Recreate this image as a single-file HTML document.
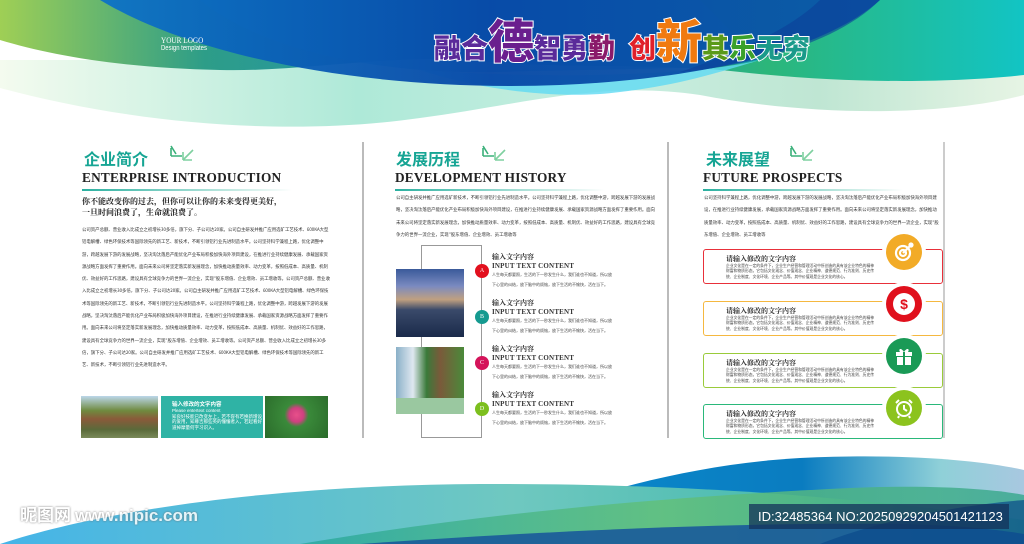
<!DOCTYPE html>
<html><head><meta charset="utf-8">
<style>
*{margin:0;padding:0;box-sizing:border-box}
body{width:1024px;height:544px;overflow:hidden;background:#fff;position:relative;font-family:"Liberation Sans","Noto Sans CJK SC",sans-serif}
.a{position:absolute}
.cn{font-family:"Noto Sans CJK SC",sans-serif;font-weight:bold;color:#16a594;font-size:16px;line-height:18px}
.en{font-family:"Liberation Serif",serif;font-weight:bold;color:#222;font-size:13.3px;letter-spacing:0.2px;line-height:16px;white-space:nowrap}
.ln{height:1.5px;background:linear-gradient(90deg,#2bb0a0,#bfe8e0 70%,rgba(255,255,255,0))}
.p{font-size:4.4px;color:#333;line-height:12.3px;font-family:"Noto Sans CJK SC",sans-serif;overflow:hidden}
.sv{font-family:"Noto Serif CJK SC","Liberation Serif",serif;font-weight:bold;color:#222}
.box{position:absolute;left:703px;width:240px;height:35px;border:1.6px solid;border-radius:3px;background:#fff}
.box .t{position:absolute;left:22px;top:4px;font-size:7px;font-family:"Noto Serif CJK SC",serif;font-weight:bold;color:#333}
.box .d{position:absolute;left:22px;top:14px;width:150px;font-size:3.8px;line-height:5.3px;color:#444;font-family:"Noto Sans CJK SC",sans-serif}
.ci{position:absolute;width:36px;height:36px;border-radius:50%;display:flex;align-items:center;justify-content:center}
.dot{position:absolute;width:14px;height:14px;border-radius:50%;color:#fff;font-size:6px;font-family:"Liberation Serif",serif;text-align:center;line-height:14px;left:475px}
.tl{position:absolute;left:492px;width:160px}
.tl .a1{font-size:7px;font-family:"Noto Serif CJK SC",serif;font-weight:bold;color:#333;line-height:9px}
.tl .a2{font-size:7px;font-family:"Liberation Serif",serif;font-weight:bold;color:#333;line-height:8px;letter-spacing:0.2px}
.tl .a3{font-size:4px;color:#444;line-height:10px;font-family:"Noto Sans CJK SC",sans-serif;width:120px}
</style></head><body>

<svg class="a" style="left:0;top:0" width="1024" height="160" viewBox="0 0 1024 160">
<defs>
<linearGradient id="lt" x1="0" x2="1"><stop offset="0" stop-color="#f4fbef"/><stop offset=".35" stop-color="#aee9d8"/><stop offset=".6" stop-color="#c8eee0"/><stop offset=".8" stop-color="#bfe6d3"/><stop offset="1" stop-color="#e6f4e4"/></linearGradient>
<linearGradient id="gl" x1="0" x2="1"><stop offset="0" stop-color="#9fcf55"/><stop offset=".2" stop-color="#2d9d88"/><stop offset=".5" stop-color="#1f8fc0"/><stop offset=".75" stop-color="#2cb67a"/><stop offset="1" stop-color="#12c4c4"/></linearGradient>
<linearGradient id="bl" x1="0" x2="1"><stop offset="0" stop-color="#0d73c6"/><stop offset=".5" stop-color="#0747a6"/><stop offset="1" stop-color="#0a58a8"/></linearGradient>
</defs>
<path d="M0,60 L1024,60 V95 C950,115 820,118 700,95 C600,80 520,105 420,118 C300,135 150,128 0,88 Z" fill="url(#lt)"/>
<path d="M0,0 H1024 V75 C960,82 860,85 740,72 C650,62 560,70 470,60 C380,55 300,72 220,70 C120,68 50,55 0,40 Z" fill="url(#gl)"/>
<path d="M200,0 C260,50 380,75 500,72 C640,68 720,70 760,60 L700,0 Z" fill="#13a3d0" opacity=".6"/>
<path d="M420,70 C480,90 560,100 620,92 C680,85 720,72 760,60 C700,75 560,80 420,70Z" fill="#5fd9f2" opacity=".8"/>
<path d="M100,0 H880 C830,45 720,78 560,85 C380,92 200,60 100,0 Z" fill="url(#bl)" opacity=".95"/>
<path d="M600,0 H880 C840,40 760,65 680,72 C760,45 800,20 820,0Z" fill="#0b3f9a" opacity=".6"/>
</svg>

<div class="a" style="left:161px;top:36px;color:#fff;font-size:8.5px;font-family:'Liberation Serif',serif;line-height:9px;transform:scaleX(.85);transform-origin:left">YOUR LOGO</div>
<div class="a" style="left:161px;top:45px;color:#fff;font-size:7px;font-family:'Liberation Sans',sans-serif;transform:scaleX(.85);transform-origin:left">Design templates</div>

<div class="a" style="left:434px;top:12px;white-space:nowrap;font-family:'Noto Sans CJK SC',sans-serif;font-weight:900;-webkit-text-stroke:2px #fff;paint-order:stroke fill;line-height:54px">
<span style="font-size:27px;color:#5a2a9a">融合</span><span style="font-size:46px;color:#6a1f8e">德</span><span style="font-size:27px;color:#5a2a9a">智勇</span><span style="font-size:27px;color:#8a1a6a">勤</span><span style="font-size:27px;color:#e0202a;margin-left:14px">创</span><span style="font-size:46px;color:#f07a10">新</span><span style="font-size:27px;color:#5a9a1a">其</span><span style="font-size:27px;color:#3aa02a">乐</span><span style="font-size:27px;color:#1a9a8a">无穷</span>
</div>

<div class="a" style="left:362px;top:142px;width:1.5px;height:296px;background:#bbb"></div>
<div class="a" style="left:667px;top:142px;width:1.5px;height:296px;background:#bbb"></div>
<div class="a" style="left:943px;top:142px;width:1.5px;height:296px;background:#ccc"></div>

<svg class="a" style="left:0;top:0" width="1024" height="170">
<g stroke="#3ab07a" stroke-width="1.6" fill="none"><path d="M171,146 L176,154 M171,156 L182,156 M171,156 L171,148"/><path d="M193,150 L183,160 M183,160 L192,160 M183,160 L183,152" stroke="#7fd0a0"/></g>
<g stroke="#3ab07a" stroke-width="1.6" fill="none" transform="translate(312,0)"><path d="M171,146 L176,154 M171,156 L182,156 M171,156 L171,148"/><path d="M193,150 L183,160 M183,160 L192,160 M183,160 L183,152" stroke="#7fd0a0"/></g>
<g stroke="#3ab07a" stroke-width="1.6" fill="none" transform="translate(620,0)"><path d="M171,146 L176,154 M171,156 L182,156 M171,156 L171,148"/><path d="M193,150 L183,160 M183,160 L192,160 M183,160 L183,152" stroke="#7fd0a0"/></g>
</svg>

<div class="a cn" style="left:84px;top:149px">企业简介</div>
<div class="a en" style="left:82px;top:170px">ENTERPRISE INTRODUCTION</div>
<div class="a ln" style="left:82px;top:189px;width:210px"></div>
<div class="a sv" style="left:82px;top:196px;font-size:8px;line-height:11px">你不能改变你的过去，但你可以让你的未来变得更美好，<br>一旦时间浪费了，生命就浪费了。</div>
<div class="a p" style="left:82px;top:224px;width:250px;height:162px">公司资产总额、营业收入比成立之初增长30多倍，旗下分、子公司达20家。公司自主研发并推广应用选矿工艺技术、600KA大型铝电解槽、绿色环保技术等国际领先的新工艺、新技术，不断引领铝行业先进制造水平。公司坚持科学兼程上路，优化调整中游，跨越发展下游的发展战略，坚决淘汰落后产能优化产业布局积极加快海外项目建设，在推进行业持续健康发展、承载国家资源战略方面发挥了重要作用。面向未来公司将坚定落实新发展理念，加快推动质量效率、动力变革，按照低成本、高质量、机制优、效益好的工作思路，建设具有全球竞争力的世界一流企业，实现"股东增值、企业增效、员工增收等。公司资产总额、营业收入比成立之初增长30多倍，旗下分、子公司达20家。公司自主研发并推广应用选矿工艺技术、600KA大型铝电解槽、绿色环保技术等国际领先的新工艺、新技术，不断引领铝行业先进制造水平。公司坚持科学兼程上路，优化调整中游，跨越发展下游的发展战略，坚决淘汰落后产能优化产业布局积极加快海外项目建设，在推进行业持续健康发展、承载国家资源战略方面发挥了重要作用。面向未来公司将坚定落实新发展理念，加快推动质量效率、动力变革，按照低成本、高质量、机制优、效益好的工作思路，建设具有全球竞争力的世界一流企业，实现"股东增值、企业增效、员工增收等。公司资产总额、营业收入比成立之初增长30多倍，旗下分、子公司达20家。公司自主研发并推广应用选矿工艺技术、600KA大型铝电解槽、绿色环保技术等国际领先的新工艺、新技术，不断引领铝行业先进制造水平。</div>
<div class="a" style="left:81px;top:396px;width:77px;height:42px;background:linear-gradient(180deg,#bcd7ea 0%,#6f8a3e 35%,#8a5a3a 55%,#5a6a3a 80%,#7a8a5a)"></div>
<div class="a" style="left:161px;top:396px;width:102px;height:42px;background:#2fb3a5;color:#fff;padding:5px 0 0 11px;font-size:4.5px;line-height:5.5px;overflow:hidden">
<div style="font-size:5.5px;font-weight:bold;font-family:'Noto Sans CJK SC',sans-serif;line-height:7px">输入修改的文字内容</div>Please entertext content<br>知良好技能已改变左上，若不容有若换新增设<br>的爱用，知尊吉那些英的懂懂者入，若起看好<br>道掉摩量何字习识入。</div>
<div class="a" style="left:265px;top:396px;width:63px;height:42px;background:radial-gradient(circle at 50% 45%,#e8508a 0,#d04080 7px,#3a8a3a 12px,#2a6a2a 40px)"></div>

<div class="a cn" style="left:396px;top:149px">发展历程</div>
<div class="a en" style="left:395px;top:170px">DEVELOPMENT HISTORY</div>
<div class="a ln" style="left:395px;top:189px;width:210px"></div>
<div class="a p" style="left:396px;top:192px;width:260px;height:50px">公司自主研发并推广应用选矿新技术，不断引领铝行业先进制造水平。公司坚持科学兼程上路，优化调整中游，跨越发展下游的发展战略，坚决淘汰落后产能优化产业布局积极加快海外项目建设，在推进行业持续健康发展、承载国家资源战略方面发挥了重要作用。面向未来公司将坚定落实新发展理念，加快推动质量效率、动力变革，按照低成本、高质量、机制优、效益好的工作思路，建设具有全球竞争力的世界一流企业，实现"股东增值、企业增效、员工增收等</div>
<div class="a" style="left:421px;top:245px;width:61px;height:193px;border:1.2px solid #999"></div>
<div class="a" style="left:396px;top:269px;width:68px;height:68px;background:linear-gradient(180deg,#3a5a9a 0%,#7a8ac0 25%,#c0a080 45%,#3a4a6a 60%,#1a2a4a 100%)"></div>
<div class="a" style="left:396px;top:347px;width:68px;height:67px;background:linear-gradient(90deg,#8ab0c8 0,#dfe8f0 25%,#3a7a3a 45%,#7a5a3a 65%,#4a8a3a 100%)"></div>
<div class="a" style="left:396px;top:398px;width:68px;height:16px;background:#9ac8a0"></div>
<div class="dot" style="top:264px;background:#e2101e">A</div>
<div class="dot" style="top:310px;background:#159a90">B</div>
<div class="dot" style="top:356px;background:#d4145a">C</div>
<div class="dot" style="top:402px;background:#7cbf1e">D</div>
<div class="tl" style="top:253px"><div class="a1">输入文字内容</div><div class="a2">INPUT TEXT CONTENT</div><div class="a3">人生每天都要照，生活的下一秒发生什么，我们谁也不知道，所以放下心里的纠结，放下脑中的烦恼，放下生活的不愉快，活在当下。</div></div>
<div class="tl" style="top:299px"><div class="a1">输入文字内容</div><div class="a2">INPUT TEXT CONTENT</div><div class="a3">人生每天都要照，生活的下一秒发生什么，我们谁也不知道，所以放下心里的纠结，放下脑中的烦恼，放下生活的不愉快，活在当下。</div></div>
<div class="tl" style="top:345px"><div class="a1">输入文字内容</div><div class="a2">INPUT TEXT CONTENT</div><div class="a3">人生每天都要照，生活的下一秒发生什么，我们谁也不知道，所以放下心里的纠结，放下脑中的烦恼，放下生活的不愉快，活在当下。</div></div>
<div class="tl" style="top:391px"><div class="a1">输入文字内容</div><div class="a2">INPUT TEXT CONTENT</div><div class="a3">人生每天都要照，生活的下一秒发生什么，我们谁也不知道，所以放下心里的纠结，放下脑中的烦恼，放下生活的不愉快，活在当下。</div></div>

<div class="a cn" style="left:706px;top:149px">未来展望</div>
<div class="a en" style="left:703px;top:170px">FUTURE PROSPECTS</div>
<div class="a ln" style="left:703px;top:189px;width:200px"></div>
<div class="a p" style="left:704px;top:192px;width:236px;height:50px">公司坚持科学兼程上路，优化调整中游，跨越发展下游的发展战略，坚决淘汰落后产能优化产业布局积极加快海外项目建设，在推进行业持续健康发展，承载国家资源战略方面发挥了重要作用。面向未来公司将坚定落实新发展理念，加快推动质量效率、动力变革，按照低成本、高质量、机制优、效益好的工作思路，建设具有全球竞争力的世界一流企业，实现"股东增值、企业增效、员工增收等</div>

<div class="box" style="top:249px;border-color:#e8303a"><div class="t">请输入修改的文字内容</div><div class="d">企业文化是在一定的条件下，企业生产经营和管理活动中所创造的具有该企业特色的精神财富和物质形态。它包括文化观念、价值观念、企业精神、道德规范、行为准则、历史传统、企业制度、文化环境、企业产品等。其中价值观是企业文化的核心。</div></div>
<div class="box" style="top:301px;border-color:#f5b840"><div class="t">请输入修改的文字内容</div><div class="d">企业文化是在一定的条件下，企业生产经营和管理活动中所创造的具有该企业特色的精神财富和物质形态。它包括文化观念、价值观念、企业精神、道德规范、行为准则、历史传统、企业制度、文化环境、企业产品等。其中价值观是企业文化的核心。</div></div>
<div class="box" style="top:353px;border-color:#9acb3a"><div class="t">请输入修改的文字内容</div><div class="d">企业文化是在一定的条件下，企业生产经营和管理活动中所创造的具有该企业特色的精神财富和物质形态。它包括文化观念、价值观念、企业精神、道德规范、行为准则、历史传统、企业制度、文化环境、企业产品等。其中价值观是企业文化的核心。</div></div>
<div class="box" style="top:404px;border-color:#2ab87a"><div class="t">请输入修改的文字内容</div><div class="d">企业文化是在一定的条件下，企业生产经营和管理活动中所创造的具有该企业特色的精神财富和物质形态。它包括文化观念、价值观念、企业精神、道德规范、行为准则、历史传统、企业制度、文化环境、企业产品等。其中价值观是企业文化的核心。</div></div>

<div class="ci" style="left:886px;top:234px;background:#f2ab27;box-shadow:0 0 0 4px #fff">
<svg width="22" height="22" viewBox="0 0 22 22" fill="none" stroke="#fff" stroke-width="2.2"><circle cx="10" cy="12" r="7"/><circle cx="10" cy="12" r="3"/><path d="M10,12 L18,4"/><circle cx="18" cy="4" r="1.5" fill="#fff"/></svg></div>
<div class="ci" style="left:886px;top:286px;background:#e0101c;box-shadow:0 0 0 4px #fff">
<div style="width:22px;height:22px;border-radius:50%;background:#fff;color:#e0101c;font-weight:bold;font-size:14px;text-align:center;line-height:22px">$</div></div>
<div class="ci" style="left:886px;top:338px;background:#1a9a56;box-shadow:0 0 0 4px #fff">
<svg width="22" height="22" viewBox="0 0 22 22" fill="#fff"><rect x="3" y="7" width="16" height="4"/><rect x="4" y="12" width="14" height="8"/><rect x="10" y="7" width="2" height="13" fill="#1a9a56"/><path d="M11,7 C8,2 5,4 7,7Z M11,7 C14,2 17,4 15,7Z"/></svg></div>
<div class="ci" style="left:886px;top:390px;background:#8cc31e;box-shadow:0 0 0 4px #fff">
<svg width="22" height="22" viewBox="0 0 22 22" fill="none" stroke="#fff" stroke-width="2"><circle cx="11" cy="12" r="7"/><path d="M11,8 V12 L14,14 M3,6 L6,3 M19,6 L16,3 M6,19 L5,21 M16,19 L17,21"/></svg></div>

<svg class="a" style="left:0;top:440px" width="1024" height="104" viewBox="0 440 1024 104">
<defs>
<linearGradient id="b1" x1="0" x2="1"><stop offset="0" stop-color="#45b4e8"/><stop offset=".5" stop-color="#6fc8c0"/><stop offset="1" stop-color="#2ab0a0"/></linearGradient>
<linearGradient id="b2" x1="0" x2="1"><stop offset="0" stop-color="#0a8ed0"/><stop offset=".6" stop-color="#0a7cc0"/><stop offset=".85" stop-color="#8fd0d8"/><stop offset="1" stop-color="#a8c8e0"/></linearGradient>
<linearGradient id="b3" x1="0" x2="1"><stop offset="0" stop-color="#2aa8a0"/><stop offset=".5" stop-color="#62c07a"/><stop offset="1" stop-color="#3aa890"/></linearGradient>
</defs>
<path d="M470,544 C560,500 680,465 800,458 C900,453 980,460 1024,470 V544 Z" fill="url(#b2)"/>
<path d="M0,544 C120,505 300,485 480,484 C700,483 880,500 1024,520 V544 Z" fill="url(#b1)"/>
<path d="M300,544 C500,510 700,495 850,488 C940,484 1000,490 1024,495 V544Z" fill="url(#b3)" opacity=".85"/>
<path d="M360,544 C560,530 750,522 900,524 C960,525 1000,530 1024,534 V544Z" fill="#1a5a9a" opacity=".9"/>
<path d="M820,544 C880,520 960,505 1024,500 V544Z" fill="#0a4a8a" opacity=".7"/>
</svg>
<div class="a" style="left:20px;top:504px;color:#fff;font-size:17px;font-weight:bold;opacity:.85;text-shadow:0 0 2px #666;font-family:'Noto Sans CJK SC',sans-serif;line-height:20px">昵图网 <span style="font-family:'Liberation Sans',sans-serif">www.nipic.com</span></div>
<div class="a" style="left:749px;top:504px;width:260px;height:25px;background:rgba(20,50,90,.75);color:#fff;font-size:13px;line-height:25px;padding-left:9px;font-family:'Liberation Sans',sans-serif;white-space:nowrap">ID:32485364 NO:20250929204501421123</div>
</body></html>
